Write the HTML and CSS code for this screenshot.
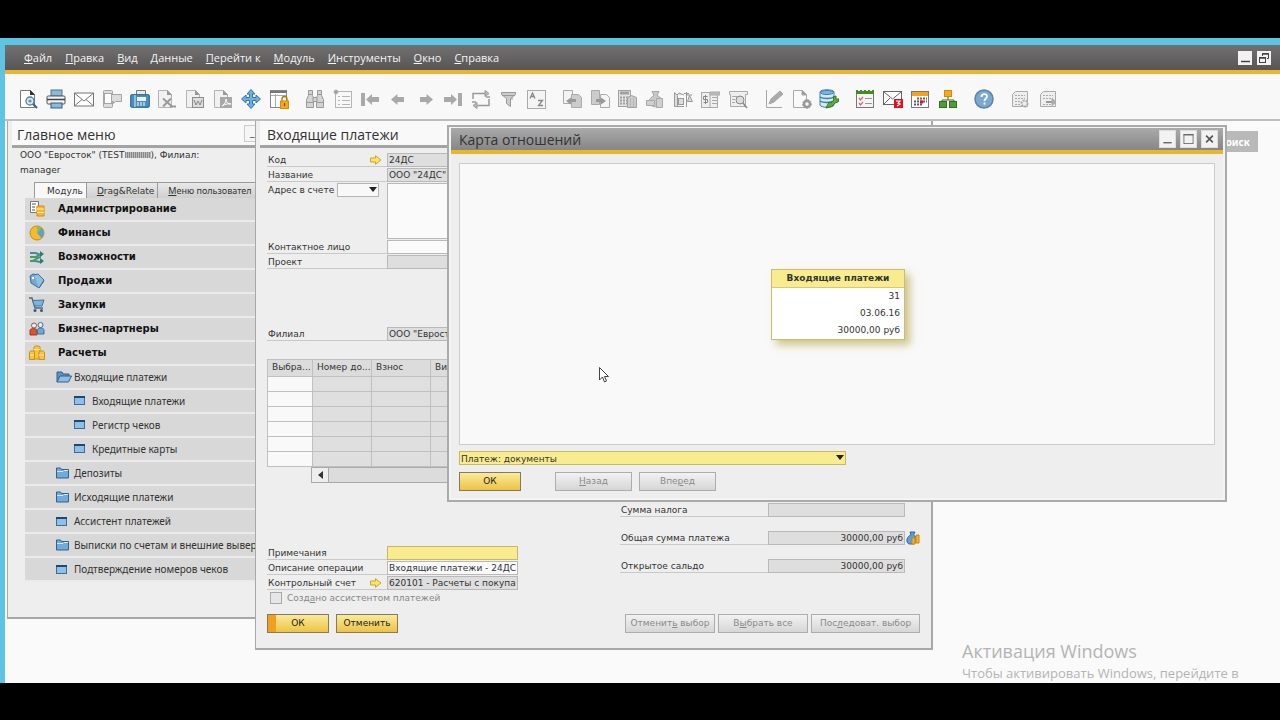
FILE: index.html
```html
<!DOCTYPE html>
<html lang="ru">
<head>
<meta charset="utf-8">
<title>Карта отношений</title>
<link rel="stylesheet" href="styles.css">
</head>
<body>
<div class="app">
  <header class="menubar">
    <nav class="menus">
      <a href="#"><u>Ф</u>айл</a><a href="#"><u>П</u>равка</a><a href="#"><u>В</u>ид</a><a href="#"><u>Д</u>анные</a><a href="#"><u>П</u>ерейти к</a><a href="#"><u>М</u>одуль</a><a href="#"><u>И</u>нструменты</a><a href="#"><u>О</u>кно</a><a href="#"><u>С</u>правка</a>
    </nav>
    <button class="sysbtn" aria-label="Свернуть"><svg viewBox="0 0 14 14"><path d="M3 10.500h9" stroke="#444" stroke-width="1.500"/></svg></button>
    <button class="sysbtn" aria-label="Восстановить"><svg viewBox="0 0 14 14" fill="none" stroke="#444"><path d="M5.500 5V2.500h6v5H10"/><path d="M5 3h7" stroke-width="1.500"/><rect x="2.500" y="6.500" width="6" height="5"/><path d="M2 7h7" stroke-width="1.500"/></svg></button>
  </header>

  <div class="toolbar">
    <div class="group g10">
      <button class="tool" aria-label="Просмотр"><svg viewBox="0 0 20 20"><path d="M2.500 1.500h10l4 4v13h-14z" fill="#fff" stroke="#777"/><path d="M12 1l5 5h-5z" fill="#333"/><circle cx="12" cy="12" r="4" fill="#d7e9f4" stroke="#54809d" stroke-width="1.300"/><circle cx="12" cy="12" r="1.600" fill="#5f93b5"/><path d="M15 15l4 4" stroke="#35607c" stroke-width="2"/></svg></button>
      <button class="tool" aria-label="Печать"><svg viewBox="0 0 20 20"><rect x="5" y="1" width="11" height="6" fill="#8cb9d9" stroke="#4c7896"/><rect x="1" y="7" width="18" height="8" rx="1" fill="#f4f4f4" stroke="#555"/><path d="M1 10.500h18" stroke="#444" stroke-width="1.500"/><rect x="5" y="14" width="11" height="5" fill="#8cb9d9" stroke="#35607c"/></svg></button>
      <button class="tool" aria-label="Почта"><svg viewBox="0 0 20 20" fill="none" stroke="#777"><rect x=".5" y="4" width="19" height="13" fill="#fff"/><path d="M1 4.500l9 7.500 9-7.500M1 16.500l7-6M19 16.500l-7-6"/></svg></button>
      <button class="tool" aria-label="SMS"><svg viewBox="0 0 20 20" fill="#dcdcdc" stroke="#a6a6a6"><rect x="1.500" y="1.500" width="9" height="17" rx="1"/><rect x="2.500" y="4.500" width="7" height="10" fill="#fff"/><path d="M9.500 5.500h10v7h-6l-2 2v-2h-2z"/></svg></button>
      <button class="tool" aria-label="Факс"><svg viewBox="0 0 20 20"><path d="M6.500 6V1.500h9V6" fill="#e9e9e9" stroke="#777"/><rect x=".7" y="5.700" width="18.600" height="12.600" rx="1" fill="#4c8fbf" stroke="#205f8f"/><path d="M5 6v12" stroke="#d8ebf7"/><rect x="7" y="8" width="9" height="4" fill="#e8f4fb"/><path d="M7 14h9M7 16h9" stroke="#fff" stroke-dasharray="2 1"/></svg></button>
      <button class="tool" aria-label="Excel"><svg viewBox="0 0 20 20"><path d="M1.500 1.500h9l4 4v13h-13z" fill="#f1f1f1" stroke="#b3b3b3"/><path d="M10 1l5 5h-5z" fill="#999"/><path d="M6 9.500l9 8M14 9.500l-8 8M13 17.500h6" stroke="#999" stroke-width="2"/></svg></button>
      <button class="tool" aria-label="Word"><svg viewBox="0 0 20 20"><path d="M1.500 1.500h9l4 4v13h-13z" fill="#f1f1f1" stroke="#b3b3b3"/><path d="M10 1l5 5h-5z" fill="#999"/><rect x="7.500" y="8.500" width="11" height="10" fill="#ddd" stroke="#8d8d8d"/><path d="M9 11l2 5 2-4 2 4 2-5" fill="none" stroke="#888"/></svg></button>
      <button class="tool" aria-label="PDF"><svg viewBox="0 0 20 20"><path d="M1.500 1.500h9l4 4v13h-13z" fill="#f1f1f1" stroke="#b3b3b3"/><path d="M10 1l5 5h-5z" fill="#999"/><rect x="7" y="8" width="12" height="11" fill="#a8a8a8"/><path d="M9 17c3-2 4-4 4-7 0 3 2 5 5 5-3-.500-6 0-9 2z" fill="none" stroke="#fff"/></svg></button>
      <button class="tool" aria-label="Переместить"><svg viewBox="0 0 20 20"><path d="M10 .5l4 4.500h-2.500v3.500H15V6l4.500 4-4.500 4v-2.500h-3.500V15H14l-4 4.500L6 15h2.500v-3.500H5V14L.5 10 5 6v2.500h3.500V5H6z" fill="#6fb1dc" stroke="#2a78ac"/></svg></button>
      <button class="tool" aria-label="Блокировка"><svg viewBox="0 0 20 20"><rect x="1.500" y="1.500" width="16" height="17" fill="#fff" stroke="#888"/><path d="M1 3h17" stroke="#777" stroke-width="2"/><path d="M6.500 5v13M2 6.500h15" stroke="#aaa"/><path d="M13 12v-2a2.500 2.500 0 015 0v2" fill="none" stroke="#b07a00" stroke-width="1.300"/><rect x="11.500" y="12" width="8" height="7.500" fill="#f6a814" stroke="#d88c00"/><path d="M15.500 14v3" stroke="#7d5200" stroke-width="1.300"/></svg></button>
    </div>
    <div class="group g9">
      <button class="tool" aria-label="Найти"><svg viewBox="0 0 20 20" fill="#d4d4d4" stroke="#999"><path d="M3.500 1.500h4v5l1 2v10h-7v-8l2-4zM12.500 1.500h4v5l2 4v8h-7v-10l1-2z"/><path d="M8 8.500h4v4H8zM1.500 13.500h7M11.500 13.500h7M3.500 5.500h4M12.500 5.500h4"/></svg></button>
      <button class="tool" aria-label="Добавить"><svg viewBox="0 0 20 20" fill="none" stroke="#b5b5b5"><rect x="2.500" y="2.500" width="16" height="16"/><path d="M9 7.500h8M9 11.500h8M9 15.500h8M5 7.500h2M5 11.500h2M5 15.500h2"/><circle cx="3" cy="3" r="2" fill="#999"/></svg></button>
      <button class="tool" aria-label="Первая запись"><svg viewBox="0 0 20 20" fill="#a9a9a9"><path d="M1 4h4v13H1zM6 10.500l6-5.500v3h7v5h-7v3z"/></svg></button>
      <button class="tool" aria-label="Предыдущая"><svg viewBox="0 0 20 20" fill="#a9a9a9"><path d="M3 10.500L9.500 5v3H16v5H9.500v3z"/></svg></button>
      <button class="tool" aria-label="Следующая"><svg viewBox="0 0 20 20" fill="#a9a9a9"><path d="M17 10.500L10.500 5v3H4v5h6.500v3z"/></svg></button>
      <button class="tool" aria-label="Последняя запись"><svg viewBox="0 0 20 20" fill="#a9a9a9"><path d="M15 4h4v13h-4zM14 10.500L8 5v3H1v5h7v3z"/></svg></button>
      <button class="tool" aria-label="Обновить"><svg viewBox="0 0 20 20" fill="none" stroke="#999" stroke-width="1.500"><path d="M2 10V4.500h12M18 10v6.500H6M5 13H1M15 8h4"/><path d="M14 1.500l4 3-4 3zM6 13.500l-4 3 4 3z" fill="#bbb" stroke-width="1"/></svg></button>
      <button class="tool" aria-label="Фильтр"><svg viewBox="0 0 20 20" fill="#ccc" stroke="#999"><path d="M3.500 3.500h14v2l-5 4v8l-4-3v-5l-5-4z"/><path d="M4 6.500h13M14 8v3"/></svg></button>
      <button class="tool" aria-label="Сортировка"><svg viewBox="0 0 20 20" fill="none" stroke="#aaa"><rect x="1.500" y="1.500" width="18" height="18" fill="#f4f4f4"/><path d="M4 9.500l2.500-5.500L9 9.500M5 7.500h3M12 11.500h4.500l-4 5H17" stroke="#888" stroke-width="1.300"/></svg></button>
    </div>
    <div class="group g7">
      <button class="tool" aria-label="Базовый документ"><svg viewBox="0 0 20 20" fill="#f3f3f3" stroke="#aaa"><path d="M1.500 1.500h9v13h-9z"/><path d="M9.500 5.500h7l3 3v10h-10z" fill="#ccc"/><path d="M14 10v3H9v2.500L4 12l5-3.500V10z" fill="#999" stroke="none"/></svg></button>
      <button class="tool" aria-label="Целевой документ"><svg viewBox="0 0 20 20" fill="#ccc" stroke="#aaa"><path d="M1.500 1.500h8v14h-8z"/><path d="M10.500 5.500h6l3 3v10h-9z" fill="#f5f5f5"/><path d="M6 10v3h5v2.500l5-3.500-5-3.500V10z" fill="#999" stroke="none"/></svg></button>
      <button class="tool" aria-label="Валовая прибыль"><svg viewBox="0 0 20 20" fill="#e3e3e3" stroke="#a0a0a0"><rect x="1.500" y="1.500" width="12" height="16"/><path d="M3 4h9" stroke-width="3"/><path d="M3 8.500h9M3 11.500h9M3 14.500h9" stroke-dasharray="2 1" stroke-width="2"/><path d="M10.500 8.500l4-2 5 2v10h-9z" fill="#ccc"/><path d="M13.500 9v9M16.500 9v9" stroke="#b5b5b5"/></svg></button>
      <button class="tool" aria-label="Средства платежа"><svg viewBox="0 0 20 20" fill="#c8c8c8" stroke="#a8a8a8"><path d="M7 2.500h7l-2 4c4 2 6 4 5 8-2 4-8 4-11 2-4-3-2-7 3-10z"/><path d="M11.500 9.500h6v9h-6zM1.500 11.500h8v5h-8z" fill="#d0d0d0"/></svg></button>
      <button class="tool" aria-label="Объем и вес"><svg viewBox="0 0 20 20" fill="#ddd" stroke="#999"><path d="M1.500 3.500l3 3v11h-3zM4 17.500h7M4 6l2-2 5 2"/><rect x="5.500" y="9.500" width="5" height="6"/><path d="M13.500 3v15M11 4.500h5M14 6h5M14.500 12.500l2-6 3 6z"/></svg></button>
      <button class="tool" aria-label="Проводка"><svg viewBox="0 0 20 20" fill="#efefef" stroke="#aaa"><rect x="1.500" y="3.500" width="16" height="15"/><path d="M10 3v16M12 8.500h5M12 11.500h5M12 14.500h5"/><path d="M10 3h10v3H10z" fill="#bbb"/><path d="M7.500 7.500h-4v3h4v3h-4M5.500 6v9" fill="none" stroke="#888"/></svg></button>
      <button class="tool" aria-label="Журнал"><svg viewBox="0 0 20 20" fill="#efefef" stroke="#aaa"><path d="M1.500 2.500h18v3h-2v12h-15v-12h-1z"/><path d="M4 7.500h5M4 10.500h3M4 13.500h3"/><circle cx="12" cy="11" r="4" fill="#ddd" stroke="#888"/><path d="M15 14l4 5" stroke="#888" stroke-width="1.500"/></svg></button>
    </div>
    <div class="group g3">
      <button class="tool" aria-label="Правка макета"><svg viewBox="0 0 20 20" fill="none" stroke="#a5a5a5"><path d="M2.500 1v17.500H18"/><path d="M5 15l2-5 9-8 3 3-9 8z" fill="#aaa"/></svg></button>
      <button class="tool" aria-label="Параметры формы"><svg viewBox="0 0 20 20" fill="#fafafa" stroke="#aaa"><path d="M1.500 1.500h9l4 4v13h-13z"/><path d="M10 1l5 5h-5z" fill="#999"/><circle cx="15" cy="15" r="3" stroke="#999" stroke-width="2.500"/><circle cx="15" cy="15" r="4.500" fill="none" stroke="#999" stroke-dasharray="1.500 1.500"/></svg></button>
      <button class="tool" aria-label="Диспетчер запросов"><svg viewBox="0 0 20 20"><path d="M1 3c0-3 14-3 14 0v13c0 3-14 3-14 0z" fill="#d4e8f6" stroke="#3b81b2"/><ellipse cx="8" cy="3.500" rx="6.500" ry="2" fill="#7db5dc" stroke="#3b81b2"/><path d="M1 8c3 2 11 2 14 0M1 12c3 2 10 2 13 0" fill="none" stroke="#3b81b2" stroke-width="1.500"/><path d="M7 19l3-6 2 1 3-3-1-3 3-1v3h3l-1 3-3 1-3 3-2 1z" fill="#5fae32" stroke="#39761c"/></svg></button>
    </div>
    <div class="group g4">
      <button class="tool" aria-label="Задачи"><svg viewBox="0 0 20 20"><rect x="1.500" y="2.500" width="17" height="16" fill="#f4f4f4" stroke="#777"/><path d="M1 1h2v1h2V1h2v1h2V1h2v1h2V1h2v1h2V1h2v4H1z" fill="#438a26"/><path d="M4 9l1.500 2L8 8M4 14l1.500 2L8 13" fill="none" stroke="#d36c78" stroke-width="1.300"/><path d="M10 9.500h7M10 14.500h7" stroke="#999"/></svg></button>
      <button class="tool" aria-label="Оповещения"><svg viewBox="0 0 20 20"><rect x=".5" y="2.500" width="18" height="13" fill="#fff" stroke="#666"/><path d="M1 3l8.500 7L18 3M1 15l6-6" fill="none" stroke="#666"/><path d="M11 10h9v9h-9z" fill="#d9141d"/><path d="M13 12h4l-2 2 2 1-3 2" fill="none" stroke="#fff" stroke-width="1.200"/></svg></button>
      <button class="tool" aria-label="Календарь"><svg viewBox="0 0 20 20"><rect x="1.500" y="2.500" width="17" height="16" fill="#fff" stroke="#777"/><path d="M2 3h16v4H2z" fill="#f3a41c"/><path d="M7 9.500h10M4 12.500h13M4 15.500h9" stroke="#6d5861" stroke-width="2" stroke-dasharray="2 1"/><path d="M10 11.500h3v3h-3z" fill="#d9141d"/></svg></button>
      <button class="tool" aria-label="Карта отношений"><svg viewBox="0 0 20 20"><path d="M10 8v3M4 13v-2h12v2" fill="none" stroke="#555"/><rect x="6.500" y="1.500" width="7" height="6" fill="#f9a81b" stroke="#d78900"/><rect x="1.500" y="12.500" width="7" height="6" fill="#4f9b35" stroke="#2f741c"/><rect x="11.500" y="12.500" width="7" height="6" fill="#4f9b35" stroke="#2f741c"/></svg></button>
    </div>
    <div class="group g1">
      <button class="tool" aria-label="Справка"><svg viewBox="0 0 20 20"><circle cx="10" cy="10" r="9" fill="#7ca9d0" stroke="#5b83a8" stroke-width="1.500"/><path d="M7.500 8c0-4 5.500-3.500 5.500-.5 0 2-2.500 2-2.500 4.500M10.500 13.500v2" fill="none" stroke="#fff" stroke-width="1.800"/></svg></button>
    </div>
    <div class="group g2">
      <button class="tool" aria-label="Настройка формы"><svg viewBox="0 0 20 20" fill="#eee" stroke="#aaa"><path d="M5.500 2.500h12v15h-15v-12z"/><path d="M5 6.500h10M5 9.500h10M5 12.500h6M5 15.500h5" stroke-dasharray="2 1"/><circle cx="14.500" cy="14.500" r="3" stroke-dasharray="2 1" stroke-width="2"/></svg></button>
      <button class="tool" aria-label="Экспорт формы"><svg viewBox="0 0 20 20" fill="#eee" stroke="#aaa"><path d="M5.500 2.500h12v15h-15v-12z"/><path d="M5 6.500h10M5 9.500h10M5 15.500h10" stroke-dasharray="2 1"/><path d="M8 13h7" stroke-width="2" stroke="#999"/><path d="M14 9.500l4 3.500-4 3.500z" fill="#aaa"/></svg></button>
    </div>
  </div>

  <main class="workspace">
    <button class="search">Поиск</button>
    <div class="watermark"><p class="wm-title">Активация Windows</p><p>Чтобы активировать Windows, перейдите в</p></div>

    <section class="window main-menu">
      <div class="title"><h2>Главное меню</h2><button class="corner" aria-label="Свернуть">_</button></div>
      <div class="company"><p>ООО "Евросток" (TEST<span class="mask"></span>), Филиал:</p><p>manager</p></div>
      <div class="tabs"><button class="tab active">Мо<u>д</u>уль</button><button class="tab"><u>D</u>rag&amp;Relate</button><button class="tab"><u>М</u>еню пользовател</button></div>
      <ul class="tree">
        <li class="module"><svg viewBox="0 0 16 16"><path d="M1.500.500h8v11h-8z" fill="#fff" stroke="#777"/><path d="M3 3h4M3 6h3M3 9h3" stroke="#555"/><path d="M8 5h7v10H8z" fill="#fbb829" stroke="#d98d00"/><path d="M8 8h7M8 11.500h7" stroke="#fff0c0"/></svg>Администрирование</li>
        <li class="module"><svg viewBox="0 0 16 16"><circle cx="8" cy="8" r="7" fill="#f8bb28" stroke="#c98a11"/><path d="M8 8V1a7 7 0 014.500 1.700z" fill="#8fc04e"/><path d="M8 8l4.500-5.300a7 7 0 010 10.300z" fill="#5da0d4"/></svg>Финансы</li>
        <li class="module"><svg viewBox="0 0 16 16" fill="none" stroke-width="2"><path d="M1 4h5c3 0 3 2 7 2M2 12h4c3 0 3 1 7 1" stroke="#3e8ab0"/><path d="M1 8h5c3 0 4-4 7-2M1 12c6 0 5-3 11-4" stroke="#4b9a63"/><path d="M11 2l4 3-4 3zM11 9l4 3-4 3z" fill="#2c7d72"/></svg>Возможности</li>
        <li class="module"><svg viewBox="0 0 16 16"><path d="M1 3l3-2 4 1 7 6-5 7-8-5z" fill="#6fa9d4" stroke="#3b719b"/><path d="M5 2l4-1 6 6-5 8" fill="#8fc0e4" stroke="#3b719b"/><circle cx="4" cy="5" r="1.200" fill="#fff"/></svg>Продажи</li>
        <li class="module"><svg viewBox="0 0 16 16"><path d="M0 1h3l3 10h8" fill="none" stroke="#4c657a" stroke-width="1.300"/><path d="M3.500 3.500L15 3l-2 6H5.500z" fill="#7db4df" stroke="#3c75a2"/><circle cx="6" cy="13.500" r="1.500" fill="#3c5870"/><circle cx="12.500" cy="13.500" r="1.500" fill="#3c5870"/></svg>Закупки</li>
        <li class="module"><svg viewBox="0 0 16 16"><circle cx="5" cy="4.500" r="2.500" fill="#eee" stroke="#8a5a50"/><path d="M1 14V9c1-2 6-2 7 0v5z" fill="#d9532b" stroke="#a93c1b"/><circle cx="11.500" cy="4" r="2.500" fill="#eee" stroke="#3b719b"/><path d="M8.500 13V8.500c1-2 5-2 6.500 0V13z" fill="#6aaadb" stroke="#3b719b"/></svg>Бизнес-партнеры</li>
        <li class="module"><svg viewBox="0 0 16 16" fill="#fbc440" stroke="#d18e12"><path d="M5 2c0-1.500 6-1.500 6 0v12H5z"/><path d="M.500 7c0-1.500 5-1.500 5 0v7.500h-5zM10 7c0-1.500 5.500-1.500 5.500 0v7.500H10z"/><path d="M5 4.500h6M1 10h4M10 10h5" stroke="#fff0b0"/></svg>Расчеты</li>
        <li class="folder"><svg class="wide" viewBox="0 0 16 12"><path d="M1 11V1h5l1 2h6v2" fill="#5b93c4" stroke="#2e618f"/><path d="M1 11l3-6h11.500l-3 6z" fill="#8dbce4" stroke="#2e618f"/></svg>Входящие платежи</li>
        <li class="leaf"><svg viewBox="0 0 12 10"><rect x=".5" y=".5" width="10" height="8" fill="#8fc0ea" stroke="#3a6d9c"/><path d="M0 1h11" stroke="#1f4870" stroke-width="2"/></svg>Входящие платежи</li>
        <li class="leaf"><svg viewBox="0 0 12 10"><rect x=".5" y=".5" width="10" height="8" fill="#8fc0ea" stroke="#3a6d9c"/><path d="M0 1h11" stroke="#1f4870" stroke-width="2"/></svg>Регистр чеков</li>
        <li class="leaf"><svg viewBox="0 0 12 10"><rect x=".5" y=".5" width="10" height="8" fill="#8fc0ea" stroke="#3a6d9c"/><path d="M0 1h11" stroke="#1f4870" stroke-width="2"/></svg>Кредитные карты</li>
        <li class="folder"><svg viewBox="0 0 14 12"><path d="M.5 11V1h4l1 1.500h7V11z" fill="#6fabdd" stroke="#2e618f"/><path d="M1 4.500h6l1-1h4" fill="none" stroke="#d4e8f8"/></svg>Депозиты</li>
        <li class="folder"><svg viewBox="0 0 14 12"><path d="M.5 11V1h4l1 1.500h7V11z" fill="#6fabdd" stroke="#2e618f"/><path d="M1 4.500h6l1-1h4" fill="none" stroke="#d4e8f8"/></svg>Исходящие платежи</li>
        <li class="folder"><svg viewBox="0 0 14 12"><rect x=".5" y="2.500" width="10" height="8" fill="#8fc0ea" stroke="#3a6d9c"/><path d="M0 3h11" stroke="#1f4870" stroke-width="2"/></svg>Ассистент платежей</li>
        <li class="folder"><svg viewBox="0 0 14 12"><path d="M.5 11V1h4l1 1.500h7V11z" fill="#6fabdd" stroke="#2e618f"/><path d="M1 4.500h6l1-1h4" fill="none" stroke="#d4e8f8"/></svg>Выписки по счетам и внешние вывер</li>
        <li class="folder"><svg viewBox="0 0 14 12"><rect x=".5" y="2.500" width="10" height="8" fill="#8fc0ea" stroke="#3a6d9c"/><path d="M0 3h11" stroke="#1f4870" stroke-width="2"/></svg>Подтверждение номеров чеков</li>
      </ul>
    </section>

    <section class="window payments">
      <div class="title"><h2>Входящие платежи</h2></div>
      <div class="form-body">
        <div class="fields">
          <div class="row"><label for="code">Код<svg class="link" viewBox="0 0 12 10"><path d="M.5 3h5V.700L11 5 5.500 9.300V7h-5z" fill="#fbe36a" stroke="#d3a321"/></svg></label><input id="code" value="24ДС" readonly></div>
          <div class="row"><label for="name">Название</label><input id="name" value='ООО "24ДС"' readonly></div>
          <div class="row tall"><label for="addr">Адрес в счете</label><span class="select small"><select id="addr"><option></option></select></span><textarea aria-label="Адрес"></textarea></div>
          <div class="row"><label for="contact">Контактное лицо</label><input id="contact" class="edit"></div>
          <div class="row"><label for="project">Проект</label><input id="project" readonly></div>
          <div class="row branch"><label for="branch">Филиал</label><input id="branch" value='ООО "Евросток"' readonly></div>
        </div>
        <table class="grid">
          <thead><tr><th class="c1">Выбра...</th><th class="c2">Номер до...</th><th class="c2">Взнос</th><th>Вид документа</th></tr></thead>
          <tbody><tr><td></td><td></td><td></td><td></td></tr><tr><td></td><td></td><td></td><td></td></tr><tr><td></td><td></td><td></td><td></td></tr><tr><td></td><td></td><td></td><td></td></tr><tr><td></td><td></td><td></td><td></td></tr><tr><td></td><td></td><td></td><td></td></tr></tbody>
        </table>
        <div class="scroll"><button aria-label="Влево"></button><div class="thumb"></div></div>
        <div class="lower">
          <div class="fields notes">
            <div class="row"><label for="notes">Примечания</label><input id="notes" class="focus"></div>
            <div class="row"><label for="descr">Описание операции</label><input id="descr" class="edit" value="Входящие платежи - 24ДС"></div>
            <div class="row"><label for="acct">Контрольный счет<svg class="link" viewBox="0 0 12 10"><path d="M.5 3h5V.700L11 5 5.500 9.300V7h-5z" fill="#fbe36a" stroke="#d3a321"/></svg></label><input id="acct" value="620101 - Расчеты с покупателями" readonly></div>
            <label class="check"><input type="checkbox" disabled><span>Созд<u>а</u>но ассистентом платежей</span></label>
          </div>
          <div class="totals">
            <div class="row"><label for="tax">Сумма налога</label><input id="tax" readonly></div>
            <div class="row"><label for="sum">Общая сумма платежа</label><input id="sum" value="30000,00 руб" readonly><button class="means" aria-label="Средства платежа"><svg viewBox="0 0 14 14"><path d="M4 1h5L7.500 4c4 2 4 8 0 9H3C-1 11 1 5 5 4z" fill="#5f9fd3" stroke="#2f6b9d"/><path d="M6 7h3v6H6zM10 4h3v8h-3z" fill="#f9b62b" stroke="#cf8508"/></svg></button></div>
            <div class="row"><label for="open">Открытое сальдо</label><input id="open" value="30000,00 руб" readonly></div>
          </div>
        </div>
        <div class="actions">
          <button class="btn gold default">ОК</button><button class="btn gold">Отменить</button>
          <span class="spacer"></span>
          <button class="btn w90" disabled>Отменит<u>ь</u> выбор</button><button class="btn w90" disabled>В<u>ы</u>брать все</button><button class="btn w109" disabled>Пос<u>л</u>едоват. выбор</button>
        </div>
      </div>
    </section>

    <section class="window map">
      <div class="map-title"><h2>Карта отношений</h2>
        <button aria-label="Свернуть"><svg viewBox="0 0 18 18"><path d="M4 13.500h10" stroke="#555" stroke-width="1.500"/></svg></button>
        <button aria-label="Развернуть"><svg viewBox="0 0 18 18" fill="none" stroke="#666"><rect x="3.500" y="3.500" width="11" height="11"/><path d="M3 4h12" stroke-width="1.500"/></svg></button>
        <button aria-label="Закрыть"><svg viewBox="0 0 18 18"><path d="M5 5l8 8M13 5l-8 8" stroke="#555" stroke-width="2"/></svg></button>
      </div>
      <div class="map-body">
        <div class="canvas">
          <article class="node"><h3>Входящие платежи</h3><p>31</p><p>03.06.16</p><p>30000,00 руб</p></article>
          <svg class="cursor" viewBox="0 0 12 18"><path d="M1.500 1.500v12.500l3-3 2 5 2-1-2-4.500h4z" fill="#fff" stroke="#444"/></svg>
        </div>
        <span class="select kind"><select aria-label="Тип связи"><option>Платеж: документы</option></select></span>
        <div class="map-actions"><button class="btn gold">ОК</button><button class="btn w77 push" disabled><u>Н</u>азад</button><button class="btn w77" disabled>Впе<u>р</u>ед</button></div>
      </div>
    </section>
  </main>
</div>
</body>
</html>
```
FILE: styles.css
```css
* { box-sizing: border-box; }
body { margin: 0; padding: 38px 0 37px; height: 100vh; background: #000; font: 9px/14px "DejaVu Sans", sans-serif; color: #333; }
h2, h3, p, ul { margin: 0; padding: 0; font-weight: normal; }
button, input, select, textarea { font: inherit; color: inherit; margin: 0; padding: 0; border-radius: 0; outline: none; }
svg { display: block; flex: none; }

.app { display: flex; flex-direction: column; height: 100%; border: solid #5fc4e3; border-width: 7px 0 0 5px; background: #fafafa; }
.menubar { display: flex; align-items: center; gap: 5px; height: 29px; padding: 0 9px 0 19px; background: linear-gradient(#727071, #575556); border-bottom: 4px solid #eab52f; }
.menus { display: flex; flex: 1; gap: 13px; font: 11px/20px "Open Sans", sans-serif; }
.menus a { color: #f4f4f4; text-decoration: none; white-space: nowrap; }
.sysbtn { width: 14px; height: 14px; border: 0; background: #f2f2f2; }

.toolbar { display: flex; align-items: center; gap: 16px; height: 47px; padding: 5px 13px 0; border-bottom: 2px solid #bdbdbd; background: #f8f8f8; }
.group { display: flex; justify-content: space-between; }
.g10 { width: 271px; }
.g9 { width: 241px; }
.g7 { width: 186px; }
.g4 { width: 103px; }
.g3 { width: 75px; }
.g2 { width: 48px; }
.tool { width: 20px; height: 20px; border: 0; background: none; }

.workspace { position: relative; flex: 1; overflow: hidden; }
.search { position: absolute; top: 10px; right: 22px; width: 70px; height: 21px; padding-right: 8px; border: 0; background: #b9b9b9; color: #fff; font: bold 10px/20px "Noto Sans", sans-serif; text-align: right; }
.watermark { position: absolute; top: 518px; left: 957px; color: #b4b4b4; font: 13px/20px "Open Sans", sans-serif; white-space: nowrap; }
.wm-title { font-size: 18px; line-height: 24px; }

.window { position: absolute; display: flex; flex-direction: column; background: #eee; border: solid #a8a8a8; border-width: 0 1px 2px; }
.title { display: flex; justify-content: space-between; height: 27px; padding-left: 7px; background: #f9f9f9; border-bottom: 3px solid #a3a3a3; }
.window h2 { flex: 1; font: 14px/27px "Open Sans", sans-serif; color: #333; }

.main-menu { left: 2px; top: 0; width: 248px; height: 498px; border-right: 0; overflow: hidden; }
.main-menu .title { margin-left: 4px; padding-left: 5px; }
.corner { align-self: center; width: 11px; height: 17px; padding-left: 5px; border: 1px solid #ccc; border-right: 0; background: #f6f6f6; line-height: 10px; text-align: left; overflow: hidden; }
.company { padding: 0 12px; line-height: 15px; }
.mask { display: inline-block; width: 26px; height: 6px; background: repeating-linear-gradient(90deg, #888 0 1px, #bbb 1px 2px); }
.tabs { display: flex; padding: 4px 0 0 26px; }
.tab { flex: none; height: 16px; padding: 0 3px 0 10px; border: 1px solid #9b9b9b; border-width: 1px 1px 0 0; background: linear-gradient(#e8e8e8, #cfcfcf); white-space: nowrap; line-height: 14px; }
.tab.active { padding-left: 12px; border-left-width: 1px; background: #f8f8f8; }
.tab:last-child { flex: 1; padding-right: 0; border-right: 0; text-align: left; font-family: "Noto Sans", sans-serif; }
.tree { margin-left: 17px; list-style: none; }
.tree li { display: flex; align-items: center; height: 24px; border-bottom: 2px solid #ebebeb; background: #d8d8d8; color: #333; font: 10px/14px "Noto Sans", sans-serif; white-space: nowrap; }
.tree svg { height: 12px; width: 14px; margin-right: 4px; }
.tree .wide { width: 16px; margin-right: 2px; }
.tree .module { padding-left: 4px; font-family: "DejaVu Sans", sans-serif; font-weight: bold; color: #111; }
.tree .module svg { width: 16px; height: 16px; margin-right: 13px; }
.tree .folder { padding-left: 31px; }
.tree .leaf { padding-left: 49px; }
.tree .leaf svg { width: 12px; height: 10px; margin-right: 6px; }

.payments { left: 250px; top: 0; width: 678px; height: 529px; border-width: 0 2px 2px 1px; }
.payments .title { margin-left: 4px; }
.form-body { flex: 1; display: flex; flex-direction: column; padding: 5px 11px 15px; }
.fields { width: 251px; }
.row { display: flex; height: 14px; margin-bottom: 1px; }
.row label { display: flex; justify-content: space-between; flex: 1; padding-left: 1px; border-bottom: 1px solid #c9c9c9; white-space: nowrap; line-height: 15px; }
.row input { width: 131px; height: 14px; padding: 0 1px; border: 1px solid #b9b9b9; background: #dedede; }
.row input.edit, textarea { background: #fafafa; }
.row input.focus { background: #f8ec8f; border-color: #c4b96a; }
.link { width: 12px; height: 10px; margin: 2px 5px 0 0; }
.row.tall { height: 56px; }
.tall label { border: 0; }
textarea { width: 131px; height: 56px; border: 1px solid #b9b9b9; resize: none; }
.select { position: relative; display: block; }
.select select { display: block; width: 100%; height: 100%; border: 1px solid #b5b5b5; background: #f8f8f8; appearance: none; }
.select::after { content: ""; position: absolute; right: 2px; top: 4px; border: 4px solid transparent; border-top: 5px solid #222; border-bottom: 0; pointer-events: none; }
.small { width: 42px; height: 14px; margin-right: 8px; }
.branch { margin-top: 58px; }

.grid { width: 100%; margin-top: 17px; border-collapse: collapse; table-layout: fixed; }
.grid th { height: 17px; padding: 0 4px 2px; font-weight: normal; text-align: left; border: 1px solid #c0c0c0; background: #dcdcdc; line-height: 14px; white-space: nowrap; }
.grid td { height: 15px; padding: 0; border: 1px solid #c0c0c0; background: #dfdfdf; }
.grid td:first-child { background: #f9f9f9; }
.c1 { width: 45px; }
.c2 { width: 59px; }
.scroll { display: flex; height: 16px; margin-left: 44px; border: 1px solid #aaa; background: #e4e4e4; }
.scroll button { width: 17px; border: 0; border-right: 1px solid #aaa; background: #eee; }
.scroll button::after { content: ""; display: block; margin: 0 auto; width: 0; border: 4px solid transparent; border-right: 5px solid #333; border-left: 0; }
.thumb { flex: 1; background: #dcdcdc; }
.lower { display: flex; justify-content: space-between; margin-top: auto; align-items: flex-end; }
.check { display: flex; align-items: center; gap: 5px; height: 14px; padding-left: 3px; color: #888; }
.check input { appearance: none; width: 12px; height: 12px; border: 1px solid #aaa; background: #e6e6e6; }
.totals { width: 300px; padding-bottom: 30px; }
.totals .row { margin-bottom: 14px; }
.totals .row:last-child { margin-bottom: 2px; }
.totals label { flex: none; width: 148px; }
.totals input { width: 137px; text-align: right; }
.means { width: 14px; height: 14px; margin-left: 1px; border: 0; background: none; }
.actions { display: flex; gap: 3px; margin-top: 9px; }
.spacer { flex: 1; }
.btn { height: 19px; width: 62px; border: 1px solid #adadad; background: linear-gradient(#f2f2f2, #d6d6d6); color: #8a8a8a; line-height: 15px; white-space: nowrap; }
.btn.gold { border-color: #857a5c; background: linear-gradient(#faea9b, #eec344); color: #222; }
.btn.default { box-shadow: inset 8px 0 #f0a01c; margin-right: 4px; }
.w90.w90 { width: 90px; }
.w109.w109 { width: 109px; }
.w77.w77 { width: 77px; }

.map { left: 442px; top: 4px; width: 780px; height: 377px; border-width: 2px; border-color: #aaa; padding: 1px 2px 0; box-shadow: inset 0 0 0 2px #f4f4f4; }
.map-title { display: flex; align-items: center; gap: 4px; height: 26px; padding: 0 5px 0 8px; background: linear-gradient(#aaa, #868686); border-bottom: 4px solid #eab52f; }
.map-title button { width: 17px; height: 18px; border: 1px solid #ddd; background: #f2f2f2; }
.map-title svg { width: 15px; height: 16px; }
.map-body { padding: 9px 8px 10px; }
.canvas { position: relative; height: 282px; border: 1px solid #ccc; background: #f9f9f9; }
.node { position: absolute; left: 311px; top: 105px; width: 134px; background: #fff; border: 1px solid #c9bd73; box-shadow: 5px 5px 8px rgba(190, 175, 90, .7); text-align: right; }
.node h3 { font-size: 9px; font-weight: bold; line-height: 17px; background: #f8ec8f; border-bottom: 1px solid #d4c87c; text-align: center; }
.node p { padding-right: 4px; line-height: 17px; }
.cursor { position: absolute; left: 138px; top: 202px; width: 12px; height: 18px; }
.kind { width: 387px; height: 14px; margin-top: 6px; }
.kind select { padding-left: 1px; background: #f8ec8f; border-color: #c4b96a; }
.map-actions { display: flex; gap: 7px; margin-top: 7px; }
.push { margin-left: 27px; }
```
